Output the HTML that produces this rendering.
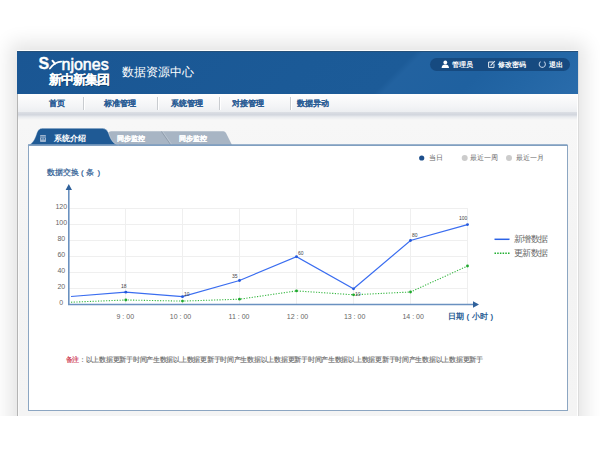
<!DOCTYPE html>
<html><head><meta charset="utf-8">
<style>
*{margin:0;padding:0;box-sizing:border-box}
html,body{width:600px;height:450px;overflow:hidden;background:#fff;font-family:"Liberation Sans",sans-serif}
.a{position:absolute}
.ni{top:97.5px;font-size:8.1px;font-weight:bold;color:#2b5d95;-webkit-text-stroke:0.08px #2b5d95;white-space:nowrap;line-height:12px}
.sep{top:97px;width:1px;height:13px;background:#c9ccd0;box-shadow:1px 0 0 #fff}
svg{position:absolute;left:0;top:0}
</style></head><body>
<div class="a" style="left:17px;top:50px;width:561px;height:420px;box-shadow:0 0 18px 7px rgba(0,0,0,0.11)"></div>
<div class="a" style="left:0;top:416px;width:600px;height:34px;background:#fff"></div>
<!-- frame -->
<div class="a" style="left:17px;top:50px;width:561px;height:366px;background:linear-gradient(to bottom,#f7f7f7 20%,#f3f3f3 60%,#f4f4f4)"></div>
<div class="a" style="left:17px;top:94px;width:1px;height:322px;background:#b4b4b4"></div>
<div class="a" style="left:577px;top:94px;width:1px;height:322px;background:#fff"></div>
<div class="a" style="left:578px;top:51px;width:1px;height:365px;background:#dcdcdc"></div>
<div class="a" style="left:18px;top:120px;width:1px;height:296px;background:#fafafa"></div>
<div class="a" style="left:17px;top:50px;width:561px;height:1px;background:#fdfdfd"></div>
<!-- header -->
<div class="a" style="left:17px;top:51px;width:561px;height:43px;background:linear-gradient(135deg,#1a5693 0%,#1b5a97 50%,#1c5b98 66%,#2262a0 67.5%,#1f61a0 80%,#2366a5 89%,#2a6cab 100%);border-top:1px solid #24507a"></div>
<!-- nav -->
<div class="a" style="left:18px;top:94px;width:559px;height:18px;background:linear-gradient(to bottom,#fefefe,#f3f4f6 70%,#eceef1)"></div>
<div class="a" style="left:18px;top:112px;width:559px;height:8px;background:linear-gradient(to bottom,#dcdfe5,#d2d6de 35%,#e8eaee 60%,#f7f7f7)"></div>
<!-- panel -->
<div class="a" style="left:28px;top:145px;width:540px;height:266px;background:#fff;border:1.5px solid #8ca6c2"></div>
<!-- header texts -->
<div class="a" style="left:38.5px;top:55.8px;font-size:16px;font-weight:bold;color:#fff;line-height:16px;-webkit-text-stroke:0.3px #fff">S</div>
<svg class="a" width="20" height="16" style="left:48px;top:56px" viewBox="0 0 20 16"><path d="M4.5 4.8 Q5.8 6 6.8 7.9" stroke="#fff" stroke-width="2" fill="none" stroke-linecap="round"/><path d="M1.9 12.6 Q4.5 9 7.5 7.3 Q10.2 6 13.2 5.7" stroke="#fff" stroke-width="1.7" fill="none" stroke-linecap="round"/></svg>
<div class="a" style="left:61.5px;top:56.5px;font-size:16px;color:#fff;line-height:16px;-webkit-text-stroke:0.55px #fff">njones</div>
<div class="a" style="left:48.5px;top:72.5px;font-size:12.5px;font-weight:bold;color:#fff;line-height:14px;letter-spacing:-0.8px;-webkit-text-stroke:0.1px #fff;text-shadow:1px 1px 0 rgba(0,0,0,.35)">新中新集团</div>
<div class="a" style="left:122px;top:65px;font-size:12px;color:#fff;line-height:14px">数据资源中心</div>
<div class="a" style="left:430px;top:57.5px;width:140px;height:13.5px;border-radius:7px;background:#164a80"></div>
<svg class="a" width="600" height="80" style="left:0;top:0" viewBox="0 0 600 80">
 <circle cx="445.3" cy="62.4" r="1.9" fill="#fff"/>
 <path d="M441.6 68 Q441.8 64.6 445.3 64.6 Q448.8 64.6 449 68 Z" fill="#fff"/>
 <path d="M493.2 62 L488.6 62 L488.6 67.4 L494 67.4 L494 63.8" fill="none" stroke="#dfe8f2" stroke-width="1"/>
 <path d="M490.6 65.6 L494.8 61.2" stroke="#dfe8f2" stroke-width="1.2"/>
 <path d="M543.9 61.6 A3.1 3.1 0 1 1 540.7 61.6" fill="none" stroke="#b4c8e0" stroke-width="1.1"/>
</svg>
<div class="a" style="left:452px;top:58.5px;font-size:6.6px;font-weight:bold;color:#fff;line-height:12px">管理员</div>
<div class="a" style="left:498px;top:58.5px;font-size:6.6px;font-weight:bold;color:#fff;line-height:12px">修改密码</div>
<div class="a" style="left:549px;top:58.5px;font-size:6.6px;font-weight:bold;color:#fff;line-height:12px">退出</div>
<!-- nav -->
<div class="a ni" style="left:49px">首页</div>
<div class="a sep" style="left:83px"></div>
<div class="a ni" style="left:104px">标准管理</div>
<div class="a sep" style="left:157px"></div>
<div class="a ni" style="left:171px">系统管理</div>
<div class="a sep" style="left:219px"></div>
<div class="a ni" style="left:232px">对接管理</div>
<div class="a sep" style="left:290px"></div>
<div class="a ni" style="left:297px">数据异动</div>

<svg width="600" height="450" viewBox="0 0 600 450">
  <!-- tabs -->
  <path d="M104 145 L108 133 Q109 131.3 111 131.3 L223.5 131.3 Q225 131.3 226 133 L232 145 Z" fill="#a8b5c4"/>
  <line x1="161.5" y1="131.5" x2="170.5" y2="144.5" stroke="#8996a5" stroke-width="0.8"/>
  <line x1="162.7" y1="131.5" x2="171.7" y2="144.5" stroke="#c4ced9" stroke-width="0.6"/>
  <path d="M27.5 145.2 C32.5 144.5 35 139 36.8 133 Q38.3 128.3 42.5 128.3 L102.5 128.3 Q106.3 128.3 108.3 132.5 C110.5 139 113 144.5 119 145.2 Z" fill="#1f5a95" stroke="#fff" stroke-width="0.5" stroke-opacity="0.7"/>
  <rect x="40" y="135" width="6" height="7" rx="0.8" fill="#9db4cf"/>
  <rect x="41.2" y="138.2" width="1.3" height="1.3" fill="#1f5a95"/><rect x="43.6" y="138.2" width="1.3" height="1.3" fill="#1f5a95"/>
  <rect x="40" y="136.6" width="6" height="0.7" fill="#1f5a95"/>
  <line x1="28" y1="145" x2="567.5" y2="145" stroke="#7d9dbf" stroke-width="1.5"/>
</svg>
<div class="a" style="left:54px;top:132.5px;font-size:8.1px;font-weight:bold;color:#fff;line-height:12px">系统介绍</div>
<div class="a" style="left:116.8px;top:133px;font-size:7px;font-weight:bold;color:#fff;line-height:12px;-webkit-text-stroke:0.15px #fff">同步监控</div>
<div class="a" style="left:179.3px;top:133px;font-size:7px;font-weight:bold;color:#fff;line-height:12px;-webkit-text-stroke:0.15px #fff">同步监控</div>


<svg width="600" height="450" viewBox="0 0 600 450" style="position:absolute;left:0;top:0">
 <g stroke="#efefef" stroke-width="1">
  <line x1="69" y1="208.5" x2="468" y2="208.5"/>
  <line x1="69" y1="224.5" x2="468" y2="224.5"/>
  <line x1="69" y1="240.5" x2="468" y2="240.5"/>
  <line x1="69" y1="256.5" x2="468" y2="256.5"/>
  <line x1="69" y1="272.5" x2="468" y2="272.5"/>
  <line x1="69" y1="288.5" x2="468" y2="288.5"/>
  <line x1="125.5" y1="208" x2="125.5" y2="304"/>
  <line x1="182.5" y1="208" x2="182.5" y2="304"/>
  <line x1="239.5" y1="208" x2="239.5" y2="304"/>
  <line x1="296.5" y1="208" x2="296.5" y2="304"/>
  <line x1="353.5" y1="208" x2="353.5" y2="304"/>
  <line x1="410.5" y1="208" x2="410.5" y2="304"/>
  <line x1="467.5" y1="208" x2="467.5" y2="304"/>
 </g>
 <polyline points="71,302.2 125.8,300 182.5,301.1 239.5,299.2 296.5,290.9 353.5,294.8 410.5,292 467.5,266" fill="none" stroke="#35b640" stroke-width="1.1" stroke-dasharray="1.2,1.5"/>
 <g fill="#1ea82c"><circle cx="125.8" cy="300" r="1.4"/><circle cx="182.5" cy="301.1" r="1.4"/><circle cx="239.5" cy="299.2" r="1.4"/><circle cx="296.5" cy="290.9" r="1.4"/><circle cx="353.5" cy="294.8" r="1.4"/><circle cx="410.5" cy="292" r="1.4"/><circle cx="467.5" cy="266" r="1.4"/></g>
 <polyline points="71,296.5 125.8,292.2 182.5,296.7 239.5,280.5 296.5,256.7 353.5,288.8 410.5,240.5 467.5,224.6" fill="none" stroke="#3a6df0" stroke-width="1.2"/>
 <g fill="#2358dc"><circle cx="125.8" cy="292.2" r="1.4"/><circle cx="182.5" cy="296.7" r="1.4"/><circle cx="239.5" cy="280.5" r="1.4"/><circle cx="296.5" cy="256.7" r="1.4"/><circle cx="353.5" cy="288.8" r="1.4"/><circle cx="410.5" cy="240.5" r="1.4"/><circle cx="467.5" cy="224.6" r="1.4"/></g>
 <g stroke="#6a91c0" stroke-width="1.6" fill="none">
  <line x1="68.8" y1="188" x2="68.8" y2="305"/>
  <line x1="68" y1="304.5" x2="474" y2="304.5"/>
 </g>
 <path d="M68.8 184 L72 190 L65.6 190 Z" fill="#2f619b"/>
 <path d="M479 304.5 L473 301.3 L473 307.7 Z" fill="#2f619b"/>
 <!-- legends -->
 <circle cx="421.7" cy="158" r="2.6" fill="#1d4f8c"/>
 <circle cx="464.7" cy="158" r="3" fill="#cccccc"/>
 <circle cx="509" cy="158" r="3" fill="#cccccc"/>
 <line x1="494.5" y1="239.3" x2="509.5" y2="239.3" stroke="#2b62e6" stroke-width="1.5"/>
 <line x1="494.5" y1="253.3" x2="509.5" y2="253.3" stroke="#1fae2e" stroke-width="1.5" stroke-dasharray="1.5,1.2"/>
</svg>
<style>
.yl{font-size:7px;color:#666;line-height:8px;text-align:center;width:20px;left:51.3px;margin-top:-0.7px}
.xl{font-size:7px;color:#666;line-height:8px;text-align:center;width:40px}
.vl{font-size:5px;color:#444;line-height:6px}
.lg{font-size:7px;color:#666;line-height:8px}
</style>
<div class="a yl" style="top:204px">120</div>
<div class="a yl" style="top:220px">100</div>
<div class="a yl" style="top:236px">80</div>
<div class="a yl" style="top:252px">60</div>
<div class="a yl" style="top:268px">40</div>
<div class="a yl" style="top:284px">20</div>
<div class="a yl" style="top:300px">0</div>
<div class="a xl" style="left:105.3px;top:312.5px">9 : 00</div>
<div class="a xl" style="left:160.5px;top:312.5px">10 : 00</div>
<div class="a xl" style="left:219px;top:312.5px">11 : 00</div>
<div class="a xl" style="left:277.5px;top:312.5px">12 : 00</div>
<div class="a xl" style="left:334.6px;top:312.5px">13 : 00</div>
<div class="a xl" style="left:393.2px;top:312.5px">14 : 00</div>
<div class="a vl" style="left:121px;top:283px">18</div>
<div class="a vl" style="left:184px;top:291px">10</div>
<div class="a vl" style="left:232px;top:273px">35</div>
<div class="a vl" style="left:298px;top:250px">60</div>
<div class="a vl" style="left:355px;top:291px">10</div>
<div class="a vl" style="left:412px;top:232px">80</div>
<div class="a vl" style="left:459px;top:215px">100</div>
<div class="a lg" style="left:429px;top:154px">当日</div>
<div class="a lg" style="left:470px;top:154px">最近一周</div>
<div class="a lg" style="left:516px;top:154px">最近一月</div>
<div class="a" style="left:514px;top:234px;font-size:8.5px;letter-spacing:-0.7px;color:#666;line-height:10px">新增数据</div>
<div class="a" style="left:514px;top:248px;font-size:8.5px;letter-spacing:-0.7px;color:#666;line-height:10px">更新数据</div>
<div class="a" style="left:46.5px;top:168px;font-size:8px;color:#2a5a92;line-height:10px;white-space:nowrap;-webkit-text-stroke:0.2px #2a5a92">数据交换<span class="a" style="left:34.5px;top:0">(</span><span class="a" style="left:39.5px;top:0">条</span><span class="a" style="left:51px;top:0">)</span></div>
<div class="a" style="left:448px;top:311.5px;font-size:8px;font-weight:bold;color:#2d5f96;line-height:10px;white-space:nowrap">日期<span class="a" style="left:18.5px;top:0">(</span><span class="a" style="left:24px;top:0">小时</span><span class="a" style="left:42.5px;top:0">)</span></div>
<div class="a" style="left:65.5px;top:354.5px;font-size:6.7px;color:#666;line-height:10px;white-space:nowrap;letter-spacing:-0.27px;-webkit-text-stroke:0.15px #777"><span style="color:#cc2a44;-webkit-text-stroke:0.15px #d04058">备注</span>：以上数据更新于时间产生数据以上数据更新于时间产生数据以上数据更新于时间产生数据以上数据更新于时间产生数据以上数据更新于</div>
</body></html>
